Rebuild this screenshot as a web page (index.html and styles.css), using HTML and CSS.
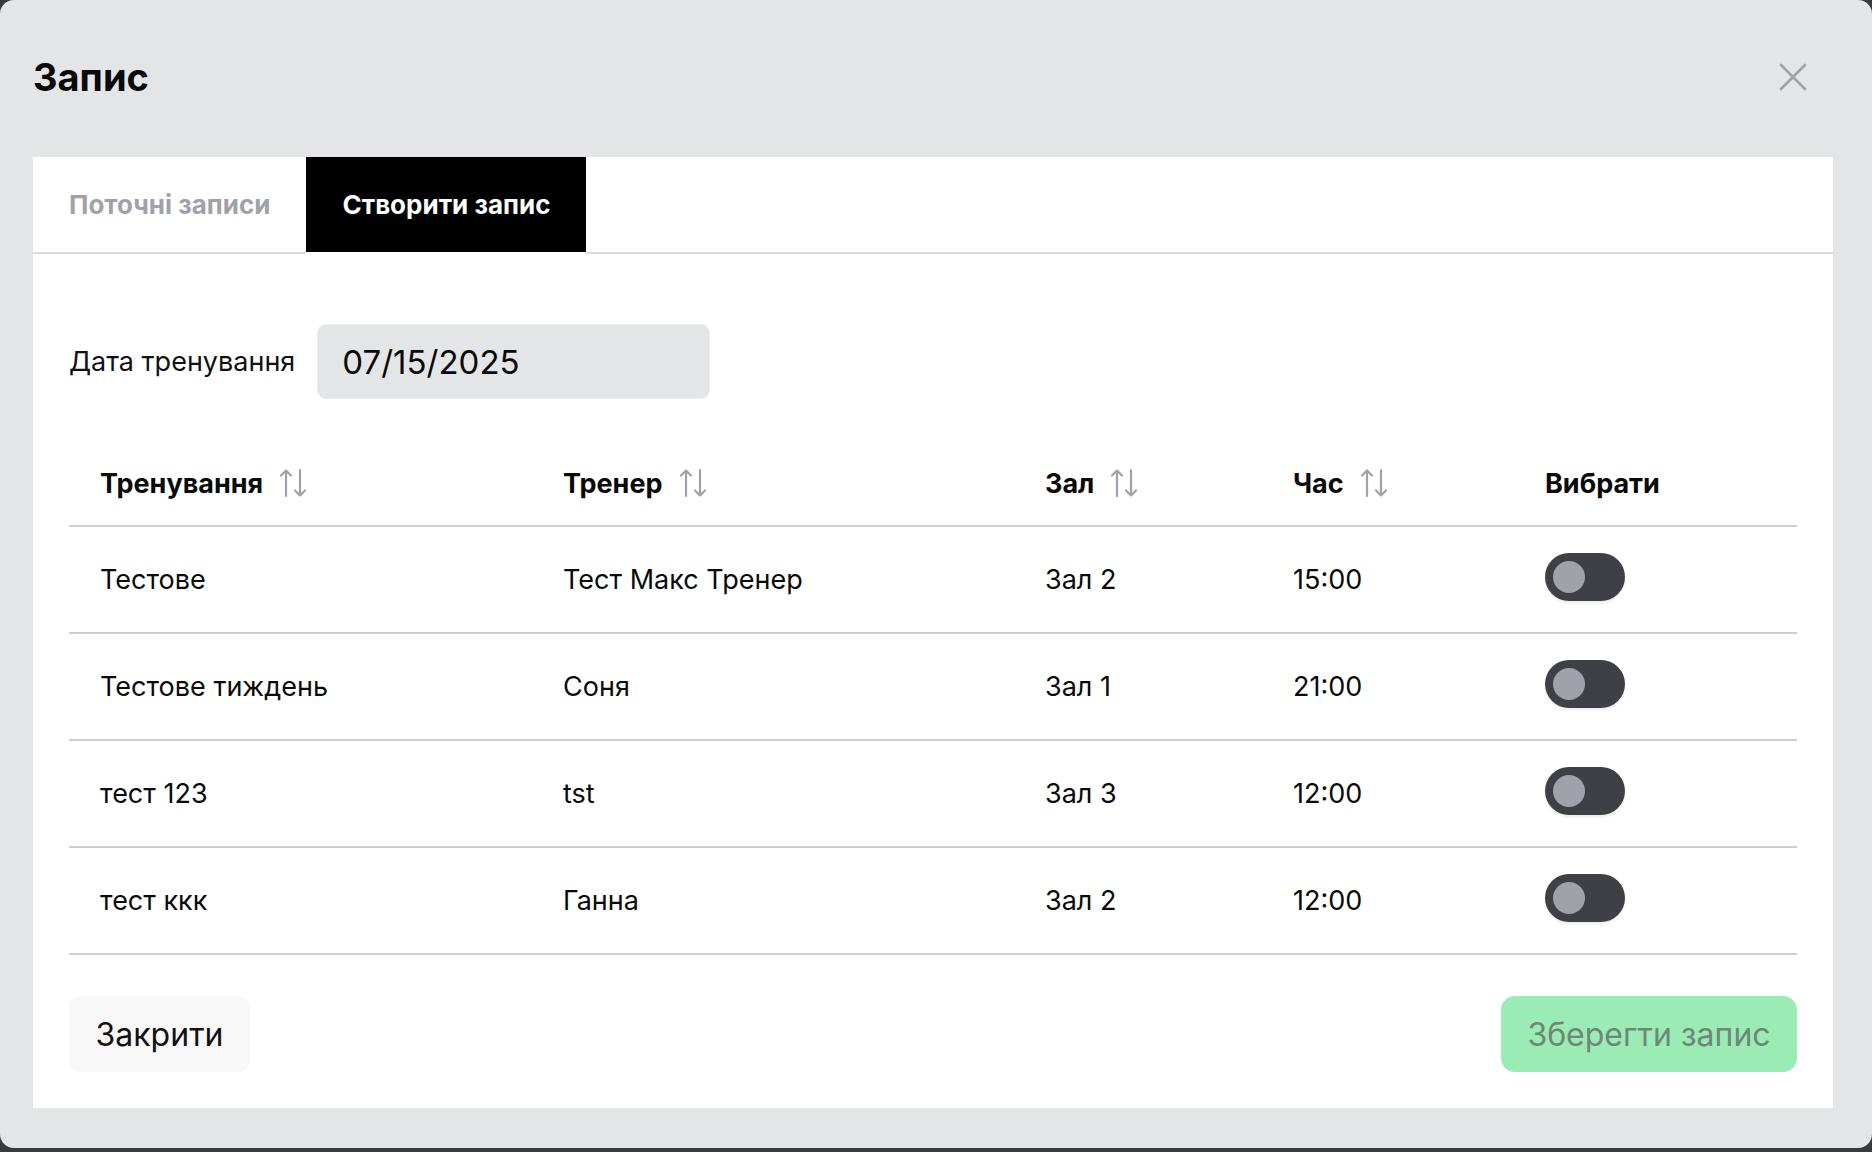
FILE: index.html
```html
<!DOCTYPE html>
<html lang="uk">
<head>
<meta charset="utf-8">
<title>Запис</title>
<link rel="stylesheet" href="styles.css">
</head>
<body>
<div class="modal">
  <div class="modal-header">
    <h1 class="modal-title">Запис</h1>
    <button class="close-btn" aria-label="Закрити">
      <svg width="28" height="28" viewBox="0 0 28 28"><path d="M2 2 L26 26 M26 2 L2 26" stroke="#a1a1aa" stroke-width="2.6" stroke-linecap="round" fill="none"/></svg>
    </button>
  </div>
  <div class="card">
    <div class="tabs">
      <div class="tab">Поточні записи</div>
      <div class="tab active">Створити запис</div>
      <div class="tab-fill"></div>
    </div>
    <div class="content">
      <div class="date-row">
        <label class="date-label">Дата тренування</label>
        <div class="date-input">07/15/2025</div>
      </div>
      <div class="table">
        <div class="row head">
          <div class="cell">Тренування <svg class="sort" viewBox="0 0 30 30"><path d="M8 28 V2.5 M3 7.5 L8 2.5 L13 7.5 M22 2 V27.5 M17 22.5 L22 27.5 L27 22.5" stroke="#a1a1aa" stroke-width="2.2" fill="none" stroke-linecap="round" stroke-linejoin="round"/></svg></div>
          <div class="cell">Тренер <svg class="sort" viewBox="0 0 30 30"><path d="M8 28 V2.5 M3 7.5 L8 2.5 L13 7.5 M22 2 V27.5 M17 22.5 L22 27.5 L27 22.5" stroke="#a1a1aa" stroke-width="2.2" fill="none" stroke-linecap="round" stroke-linejoin="round"/></svg></div>
          <div class="cell">Зал <svg class="sort" viewBox="0 0 30 30"><path d="M8 28 V2.5 M3 7.5 L8 2.5 L13 7.5 M22 2 V27.5 M17 22.5 L22 27.5 L27 22.5" stroke="#a1a1aa" stroke-width="2.2" fill="none" stroke-linecap="round" stroke-linejoin="round"/></svg></div>
          <div class="cell">Час <svg class="sort" viewBox="0 0 30 30"><path d="M8 28 V2.5 M3 7.5 L8 2.5 L13 7.5 M22 2 V27.5 M17 22.5 L22 27.5 L27 22.5" stroke="#a1a1aa" stroke-width="2.2" fill="none" stroke-linecap="round" stroke-linejoin="round"/></svg></div>
          <div class="cell">Вибрати</div>
        </div>
        <div class="row">
          <div class="cell">Тестове</div>
          <div class="cell">Тест Макс Тренер</div>
          <div class="cell">Зал 2</div>
          <div class="cell">15:00</div>
          <div class="cell"><span class="toggle"><span class="knob"></span></span></div>
        </div>
        <div class="row">
          <div class="cell">Тестове тиждень</div>
          <div class="cell">Соня</div>
          <div class="cell">Зал 1</div>
          <div class="cell">21:00</div>
          <div class="cell"><span class="toggle"><span class="knob"></span></span></div>
        </div>
        <div class="row">
          <div class="cell">тест 123</div>
          <div class="cell">tst</div>
          <div class="cell">Зал 3</div>
          <div class="cell">12:00</div>
          <div class="cell"><span class="toggle"><span class="knob"></span></span></div>
        </div>
        <div class="row">
          <div class="cell">тест ккк</div>
          <div class="cell">Ганна</div>
          <div class="cell">Зал 2</div>
          <div class="cell">12:00</div>
          <div class="cell"><span class="toggle"><span class="knob"></span></span></div>
        </div>
      </div>
      <div class="actions">
        <button class="btn btn-close">Закрити</button>
        <button class="btn btn-save">Зберегти запис</button>
      </div>
    </div>
  </div>
</div>
</body>
</html>
```
FILE: styles.css
```css
* { box-sizing: border-box; }
html, body { margin: 0; padding: 0; }
body {
  background: #3a3a3c;
  width: 1872px;
  height: 1152px;
  overflow: hidden;
  font-family: Inter, "Noto Sans", sans-serif;
  color: #111;
}
.modal {
  height: 1148px;
  background: #e4e5e7;
  border-radius: 14px;
  display: flex;
  flex-direction: column;
}
.modal-header {
  height: 157px;
  display: flex;
  align-items: center;
  justify-content: space-between;
  padding: 0 65px 4px 33px;
}
.modal-title {
  margin: 0;
  font-size: 38px;
  font-weight: 700;
  color: #0a0a0a;
  letter-spacing: 0;
}
.close-btn {
  background: none;
  border: 0;
  padding: 0;
  width: 28px;
  height: 28px;
  display: flex;
}
.card {
  margin: 0 39px 0 33px;
  background: #fff;
  display: flex;
  flex-direction: column;
}
.tabs {
  display: flex;
  height: 97px;
}
.tab {
  padding: 0 36px;
  display: flex;
  align-items: center;
  font-size: 26px;
  font-weight: 700;
  color: #a1a1aa;
  border-bottom: 2px solid #dcdcde;
}
.tab.active {
  background: #000;
  color: #fff;
  border-bottom-color: #fff;
}
.tab-fill {
  flex: 1;
  border-bottom: 2px solid #dcdcde;
}
.content {
  padding: 70px 36px 36px;
}
.date-row {
  display: flex;
  align-items: center;
  gap: 22px;
}
.date-label {
  font-size: 27px;
  color: #111;
}
.date-input {
  width: 393px;
  height: 75px;
  background: #e4e5e7;
  border: 1px solid #eceded;
  border-radius: 9px;
  padding-left: 24px;
  display: flex;
  align-items: center;
  font-size: 33px;
  color: #0a0a0a;
}
.table {
  margin-top: 40px;
}
.row {
  display: grid;
  grid-template-columns: 463px 482px 248px 252px 1fr;
  height: 107px;
  border-bottom: 2px solid #cfcfd1;
}
.row.head {
  height: 88px;
  font-weight: 700;
}
.row.head .cell {
  padding-top: 2px;
}
.cell {
  display: flex;
  align-items: center;
  padding-left: 31px;
  font-size: 27px;
  color: #0a0a0a;
}
.sort {
  width: 30px;
  height: 30px;
  margin-left: 15px;
}
.toggle {
  width: 80px;
  height: 48px;
  border-radius: 24px;
  background: #3f3f46;
  display: flex;
  align-items: center;
  padding-left: 8px;
  margin-bottom: 6px;
  box-shadow: 0 2px 3px rgba(0,0,0,0.08);
}
.knob {
  width: 32px;
  height: 32px;
  border-radius: 50%;
  background: #a1a1aa;
}
.actions {
  margin-top: 41px;
  display: flex;
  justify-content: space-between;
}
.btn {
  height: 76px;
  border: 0;
  font-family: Inter, "Noto Sans", sans-serif;
  font-size: 32px;
  padding: 0;
}
.btn-close {
  background: #f8f8f8;
  color: #111;
  border-radius: 12px;
  width: 181px;
}
.btn-save {
  background: #9bebb5;
  color: #6e8876;
  border-radius: 14px;
  width: 296px;
}
```
